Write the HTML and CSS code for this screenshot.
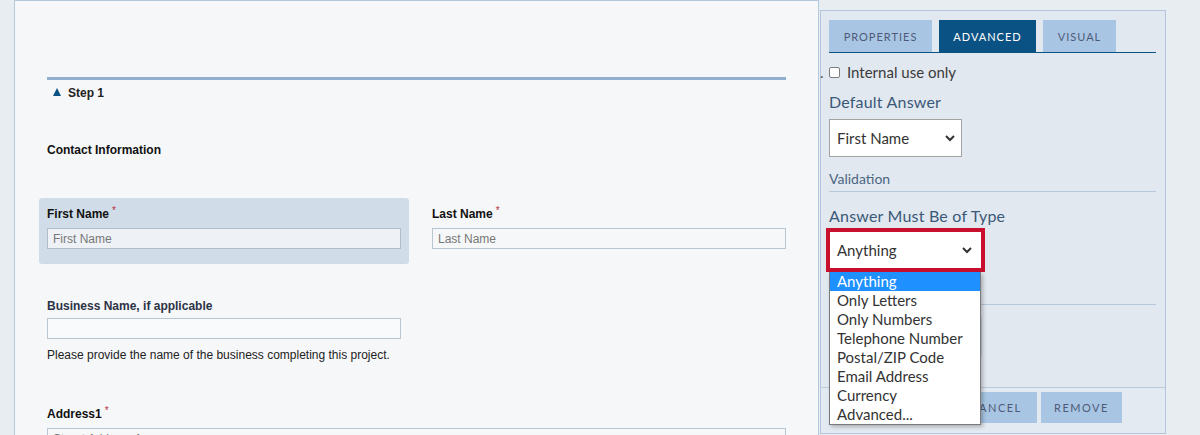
FILE: index.html
```html
<!DOCTYPE html>
<html lang="en">
<head>
<meta charset="utf-8">
<title>Form builder</title>
<link rel="stylesheet" href="styles.css">
</head>
<body>
<div class="page">
  <main class="canvas">
    <div class="step-head"><span class="tri"></span><span>Step 1</span></div>
    <h3 class="section-title">Contact Information</h3>
    <div class="grid2 row-first">
      <div class="field field-active">
        <label class="flabel">First Name<sup class="req">*</sup></label>
        <input class="finput finput-active" type="text" placeholder="First Name">
      </div>
      <div class="field">
        <label class="flabel">Last Name<sup class="req">*</sup></label>
        <input class="finput" type="text" placeholder="Last Name">
      </div>
    </div>
    <div class="grid2 row-business">
      <div class="field">
        <label class="flabel flabel-alt">Business Name, if applicable</label>
        <input class="finput finput-white" type="text">
        <p class="help">Please provide the name of the business completing this project.</p>
      </div>
    </div>
    <div class="row-address">
      <div class="field">
        <label class="flabel">Address1<sup class="req">*</sup></label>
        <input class="finput" type="text" placeholder="Street Address 1">
      </div>
    </div>
  </main>

  <aside class="panel">
    <div class="panel-body">
      <nav class="tabs">
        <div class="tab tab-props">PROPERTIES</div>
        <div class="tab tab-adv active">ADVANCED</div>
        <div class="tab tab-vis">VISUAL</div>
      </nav>
      <div class="check-row">
        <span class="trunc">.</span>
        <span class="checkbox"></span>
        <span class="check-text">Internal use only</span>
      </div>
      <div class="label-lg label-default">Default Answer</div>
      <div class="select select-default">
        <span>First Name</span>
        <svg class="chev" width="10" height="7" viewBox="0 0 10 7"><polyline points="1,1 5,5 9,1" fill="none" stroke="#333" stroke-width="2"/></svg>
      </div>
      <div class="section-head">Validation</div>
      <div class="label-lg label-type">Answer Must Be of Type</div>
      <div class="select select-type">
        <span>Anything</span>
        <svg class="chev" width="10" height="7" viewBox="0 0 10 7"><polyline points="1,1 5,5 9,1" fill="none" stroke="#333" stroke-width="2"/></svg>
        <ul class="dropdown">
          <li class="opt selected">Anything</li>
          <li class="opt">Only Letters</li>
          <li class="opt">Only Numbers</li>
          <li class="opt">Telephone Number</li>
          <li class="opt">Postal/ZIP Code</li>
          <li class="opt">Email Address</li>
          <li class="opt">Currency</li>
          <li class="opt">Advanced...</li>
        </ul>
      </div>
      <div class="sep"></div>
      <div class="ghost-box"></div>
    </div>
    <footer class="panel-foot">
      <button class="btn btn-save">SAVE</button>
      <button class="btn btn-cancel">CANCEL</button>
      <button class="btn btn-remove">REMOVE</button>
    </footer>
  </aside>
</div>
</body>
</html>
```

FILE: styles.css
```css
html, body {
  margin: 0;
  padding: 0;
}
body {
  background: #e8edf2;
  height: 435px;
  overflow: hidden;
  font-family: "Liberation Sans", Arial, sans-serif;
}
.page {
  display: flex;
  align-items: flex-start;
  padding-left: 14px;
}

/* ---------- left canvas ---------- */
.canvas {
  width: 805px;
  box-sizing: border-box;
  border: 1px solid #b3c8dc;
  background: #f6f7f9;
  padding: 76px 32px 60px 32px;
  min-height: 520px;
  flex: none;
}
.step-head {
  border-top: 3px solid #91b0cf;
  padding: 6px 0 0 6px;
  display: flex;
  align-items: center;
  font-weight: bold;
  font-size: 12px;
  line-height: 14px;
  color: #222;
}
.tri {
  width: 0;
  height: 0;
  border-left: 4px solid transparent;
  border-right: 4px solid transparent;
  border-bottom: 8px solid #0b5284;
  margin-right: 7px;
  margin-top: -2px;
}
.section-title {
  margin: 43px 0 0;
  font-size: 12px;
  line-height: 14px;
  font-weight: bold;
  color: #111;
}
.grid2 {
  display: grid;
  grid-template-columns: 370px 370px;
  column-gap: 15px;
  margin: 0 -8px;
}
.row-first { margin-top: 41px; }
.row-business { margin-top: 26px; }
.row-address { margin: 21px -8px 0; }
.field {
  padding: 8px 8px 15px;
  border-radius: 3px;
}
.field-active { background: #d0dde8; }
.flabel {
  display: block;
  font-size: 12px;
  line-height: 16px;
  font-weight: bold;
  color: #111;
  margin-bottom: 6px;
}
.flabel-alt {
  color: #2c3345;
  margin-bottom: 4px;
}
.req {
  color: #b8323c;
  font-size: 10px;
  font-weight: normal;
  margin-left: 3px;
  vertical-align: 4px;
  line-height: 0;
}
.finput {
  display: block;
  width: 100%;
  height: 21px;
  box-sizing: border-box;
  border: 1px solid #b8c5d2;
  background: #f6f7f9;
  font-family: "Liberation Sans", Arial, sans-serif;
  font-size: 12px;
  padding: 0 5px;
  color: #333;
  margin: 0;
  border-radius: 0;
  outline: none;
}
.finput::placeholder { color: #777; }
.finput-active { background: #eef2f6; border-color: #aebccb; }
.finput-white { background: #f9fafc; }
.help {
  margin: 9px 0 0;
  font-size: 12px;
  line-height: 14px;
  color: #222;
}

/* ---------- right panel ---------- */
.panel {
  margin: 10px 0 0 1px;
  width: 346px;
  height: 424px;
  box-sizing: border-box;
  border: 1px solid #b4c7da;
  background: #e2e8ef;
  display: flex;
  flex-direction: column;
  flex: none;
  font-family: Lato, "Noto Sans", sans-serif;
  color: #333;
}
.panel-body {
  padding: 9px 9px 0 8px;
}
.tabs {
  display: flex;
  gap: 7px;
  border-bottom: 1px solid #0b5284;
}
.tab {
  height: 32px;
  display: flex;
  align-items: center;
  justify-content: center;
  background: #a8c6e3;
  color: #4f5a78;
  font-size: 11px;
  letter-spacing: 1px;
}
.tab-props { width: 103px; }
.tab-adv { width: 97px; }
.tab-vis { width: 73px; }
.tab.active {
  background: #0b5284;
  color: #fff;
}
.check-row {
  margin-top: 10px;
  height: 18px;
  display: flex;
  align-items: center;
}
.trunc {
  width: 9px;
  margin-left: -9px;
  text-align: left;
  font-size: 15px;
  color: #555;
}
.checkbox {
  width: 11px;
  height: 11px;
  box-sizing: border-box;
  border: 1px solid #7d7d7d;
  border-radius: 2px;
  background: #fff;
}
.check-text {
  margin-left: 7px;
  font-size: 15px;
  color: #3a3a3a;
}
.label-lg {
  margin-top: 10px;
  font-size: 16px;
  line-height: 20px;
  color: #3b5878;
  letter-spacing: 0.2px;
}
.label-default { margin-top: 11px; }
.select {
  display: flex;
  align-items: center;
  justify-content: space-between;
  box-sizing: border-box;
  background: #fff;
  font-size: 15px;
  color: #333;
}
.select-default {
  margin-top: 7px;
  width: 133px;
  height: 38px;
  border: 1px solid #a3a3a3;
  padding: 0 6px 0 7px;
}
.section-head {
  margin-top: 13px;
  font-size: 14px;
  line-height: 18px;
  color: #4b6682;
  padding-bottom: 3px;
  border-bottom: 1px solid #b6c9dc;
}
.label-type { margin-top: 14px; }
.select-type {
  position: relative;
  margin: 2px 0 0 -3px;
  width: 159px;
  height: 44px;
  border: 4px solid #c8102e;
  padding: 0 9px 0 7px;
}
.dropdown {
  position: absolute;
  left: -1px;
  top: 40px;
  width: 152px;
  box-sizing: border-box;
  margin: 0;
  padding: 0;
  list-style: none;
  background: #fff;
  border: 1px solid #7a7a7a;
  border-top: none;
  box-shadow: 2px 2px 4px rgba(0, 0, 0, 0.25);
  z-index: 5;
}
.opt {
  height: 19px;
  line-height: 19px;
  padding-left: 7px;
  font-size: 15px;
  color: #333;
  white-space: nowrap;
}
.opt.selected {
  background: #1e90ff;
  color: #fff;
}
.sep {
  margin-top: 32px;
  border-top: 1px solid #b6c9dc;
}
.ghost-box {
  margin-top: 12px;
  width: 153px;
  height: 40px;
  box-sizing: border-box;
  border: 1px solid #c3cfdb;
}
.panel-foot {
  margin-top: auto;
  height: 46px;
  box-sizing: border-box;
  border-top: 1px solid #b9cadb;
  padding: 4px 0 0 8px;
  display: flex;
  align-items: flex-start;
  gap: 4px;
  background: #e4eaf1;
}
.btn {
  height: 31px;
  border: none;
  margin: 0;
  padding: 0;
  background: #a8c6e3;
  color: #4f5a78;
  font-family: Lato, "Noto Sans", sans-serif;
  font-size: 11px;
  letter-spacing: 1.5px;
}
.btn-save { width: 122px; }
.btn-cancel { width: 82px; }
.btn-remove { width: 81px; }
```
